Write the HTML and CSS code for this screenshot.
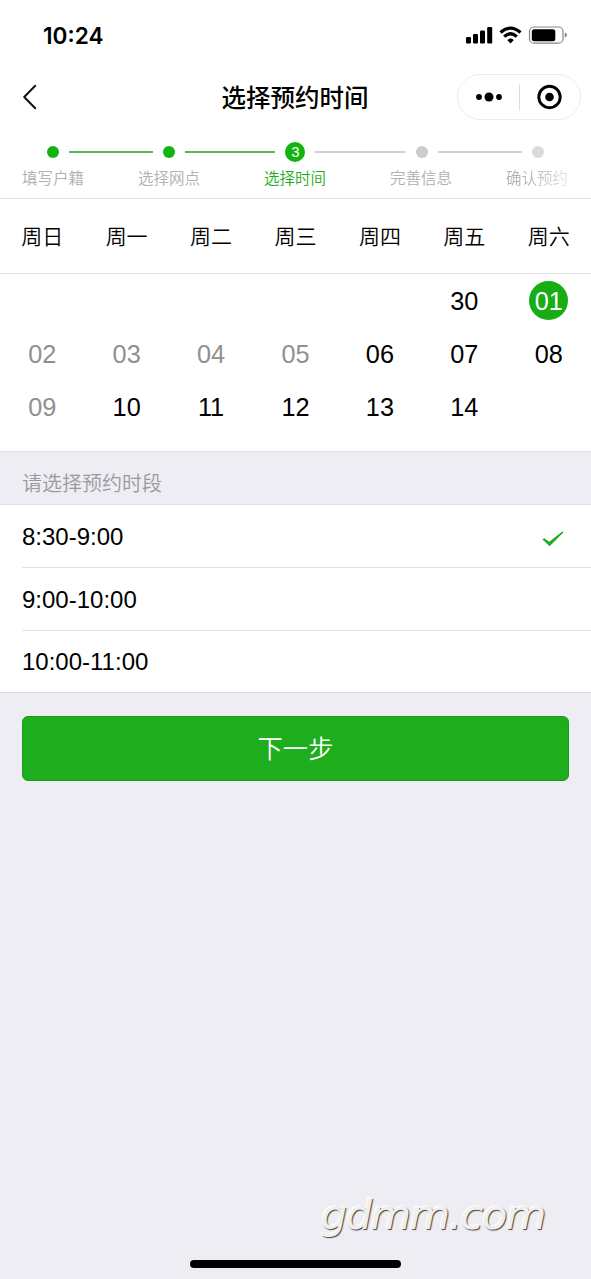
FILE: index.html
```html
<!DOCTYPE html>
<html lang="zh-CN">
<head>
<meta charset="utf-8">
<title>选择预约时间</title>
<link rel="stylesheet" href="styles.css">
</head>
<body>
<div class="screen">
  <header class="status">
    <span class="clock">10:24</span>
    <svg class="status-icons" width="102" height="20" viewBox="0 0 102 20">
      <rect x="1" y="12" width="5" height="6.500" rx="1.200"/>
      <rect x="8" y="9" width="5" height="9.500" rx="1.200"/>
      <rect x="15" y="5.500" width="5" height="13" rx="1.200"/>
      <rect x="22.200" y="2" width="5" height="16.500" rx="1.200"/>
      <g fill="none" stroke="#000" stroke-width="3.200">
        <path d="M35.500 7.500 Q45.500 -1.300 55.500 7.500"/>
        <path d="M39.200 11.600 Q45.500 5.800 51.800 11.600"/>
      </g>
      <path d="M42.200 15 Q45.500 12.200 48.800 15 L45.500 18.500 Z"/>
      <rect x="64.500" y="2" width="33.500" height="16.200" rx="4.500" fill="none" stroke="#858585" stroke-width="1.200"/>
      <rect x="66.800" y="4.200" width="23.500" height="12" rx="2.500"/>
      <path d="M99.800 7.500 Q102 8.300 102 10 Q102 11.700 99.800 12.500 Z" fill="#858585"/>
    </svg>
  </header>

  <nav class="nav">
    <svg class="back" width="16" height="26" viewBox="0 0 16 26"><path d="M13.200 1.800 L2.200 13 L13.200 24.200" fill="none" stroke="#111" stroke-width="2" stroke-linecap="round" stroke-linejoin="round"/></svg>
    <h1 class="title">选择预约时间</h1>
    <div class="capsule">
      <svg class="more" width="28" height="12" viewBox="0 0 28 12"><circle cx="4" cy="6" r="2.900"/><circle cx="14" cy="6" r="4.500"/><circle cx="24" cy="6" r="2.900"/></svg>
      <span class="capsule-line"></span>
      <svg width="26" height="26" viewBox="0 0 26 26"><circle cx="13.500" cy="13" r="10.700" fill="none" stroke="#000" stroke-width="2.900"/><circle cx="13.500" cy="13" r="4.300"/></svg>
    </div>
  </nav>

  <section class="steps">
    <div class="track">
      <i class="dot done"></i><i class="line done"></i>
      <i class="dot done"></i><i class="line long done"></i>
      <b class="current">3</b><i class="line long"></i>
      <i class="dot"></i><i class="line"></i>
      <i class="dot last"></i>
    </div>
    <div class="labels">
      <span>填写户籍</span><span>选择网点</span><span class="active">选择时间</span><span>完善信息</span><span class="fade">确认预约</span>
    </div>
  </section>

  <div class="week">
    <span>周日</span><span>周一</span><span>周二</span><span>周三</span><span>周四</span><span>周五</span><span>周六</span>
  </div>

  <div class="days">
    <span></span><span></span><span></span><span></span><span></span><span>30</span><span><b class="selected">01</b></span>
    <span class="off">02</span><span class="off">03</span><span class="off">04</span><span class="off">05</span><span>06</span><span>07</span><span>08</span>
    <span class="off">09</span><span>10</span><span>11</span><span>12</span><span>13</span><span>14</span><span></span>
  </div>

  <div class="hint">请选择预约时段</div>

  <ul class="slots">
    <li>8:30-9:00
      <svg width="22" height="16" viewBox="0 0 22 16"><path d="M0.500 8.500 L2.200 7.200 L7.300 10.800 L20.300 0.500 L21.500 1.300 L7.600 15.200 Z" fill="#1ead1c"/></svg>
    </li>
    <li>9:00-10:00</li>
    <li>10:00-11:00</li>
  </ul>

  <button class="next">下一步</button>

  <footer class="footer">
    <div class="watermark">gdmm.com</div>
    <div class="home-bar"></div>
  </footer>
</div>
</body>
</html>
```
FILE: styles.css
```css
* { box-sizing: border-box; }

body {
  margin: 0;
  background: #eeedf3;
  color: #000;
  font-family: "Liberation Sans", "Noto Sans CJK SC", sans-serif;
}

.screen {
  display: flex;
  flex-direction: column;
  width: 591px;
  height: 1279px;
  overflow: hidden;
}

.status {
  display: flex;
  justify-content: space-between;
  align-items: center;
  height: 70px;
  padding: 0 24px 0 43px;
  background: #fff;
}

.clock {
  padding-top: 2px;
  font: 600 22.6px/30px Inter, sans-serif;
}

.nav {
  display: grid;
  grid-template-columns: 1fr auto 1fr;
  align-items: center;
  height: 54px;
  padding: 0 10px 0 22px;
  background: #fff;
}

.title {
  margin: 0 0 0 -13px;
  padding-top: 3px;
  font-size: 24.5px;
  line-height: 36px;
  font-weight: 500;
}

.capsule {
  display: flex;
  align-items: center;
  justify-self: end;
  gap: 16px;
  width: 124px;
  height: 46px;
  padding-left: 17px;
  border: 1px solid #ececec;
  border-radius: 23px;
}

.capsule-line {
  width: 1px;
  height: 27px;
  background: #dcdcdc;
}

.steps {
  height: 75px;
  padding-top: 16px;
  border-bottom: 1px solid #e5e5e5;
  background: #fff;
}

.track {
  display: flex;
  align-items: center;
  gap: 10.1px;
  height: 24px;
  padding-left: 47px;
}

.dot {
  width: 12px;
  height: 12px;
  border-radius: 50%;
  background: #ccc;
}

.dot.last { background: #dadada; }

.line {
  width: 84px;
  height: 2px;
  background: #d2d2d2;
}

.line.long { width: 90px; }
.dot.done { background: #12b50f; }
.line.done { background: #59b556; }

.current {
  width: 20px;
  height: 20px;
  border-radius: 50%;
  background: #12b50f;
  color: #fff;
  font-size: 15px;
  line-height: 20px;
  font-weight: 400;
  text-align: center;
}

.labels {
  display: grid;
  grid-template-columns: 116px 126px 126px 116px 70px;
  padding: 1px 0 0 22px;
  color: #b0b0b0;
  font-family: "Noto Sans CJK SC DemiLight", "Noto Sans CJK SC", sans-serif;
  font-size: 15.5px;
  line-height: 24px;
  font-weight: 350;
}

.labels .active { color: #1ead1c; }

.labels .fade {
  background: linear-gradient(90deg, #b0b0b0 30%, #e4e4e4 90%);
  background-clip: text;
  color: transparent;
}

.week, .days {
  display: grid;
  grid-template-columns: repeat(7, 1fr);
  background: #fff;
  text-align: center;
}

.week {
  height: 75px;
  border-bottom: 1px solid #e5e5e5;
  font-size: 21px;
  line-height: 75px;
  font-weight: 350;
}

.days {
  height: 177px;
  grid-auto-rows: 53px;
  align-content: start;
  font-size: 25.3px;
  line-height: 55px;
}

.off { color: #909090; }

.selected {
  display: block;
  width: 39px;
  height: 39px;
  margin: 7px auto 0;
  border-radius: 50%;
  background: #18ad15;
  color: #fff;
  font-weight: 400;
  line-height: 41px;
}

.hint {
  height: 54px;
  padding-left: 22px;
  border-top: 1px solid #e2e2e6;
  border-bottom: 1px solid #dedee2;
  color: #9a9a9e;
  font-size: 20px;
  line-height: 65px;
  font-weight: 350;
}

.slots {
  height: 188px;
  margin: 0;
  padding: 0 0 0 22px;
  border-bottom: 1px solid #dedee2;
  background: #fff;
  list-style: none;
}

.slots li {
  display: flex;
  justify-content: space-between;
  align-items: center;
  height: 63px;
  padding: 1px 27px 0 0;
  border-bottom: 1px solid #e1e1e3;
  font-size: 24px;
}

.slots svg { margin-top: 5px; }
.slots li:last-child { height: 61px; border: 0; }

.next {
  height: 65px;
  margin: 23px 22px 0;
  padding: 0 0 3px;
  border: 1px solid #1b9b1a;
  border-radius: 6px;
  background: #1ead1c;
  color: #fff;
  font: 350 25.3px/60px "Noto Sans CJK SC", sans-serif;
}

.footer {
  display: flex;
  flex-direction: column;
  align-items: center;
  margin-top: auto;
  padding-bottom: 11px;
}

.watermark {
  align-self: flex-end;
  margin-right: 46px;
  color: #efefef;
  font: italic 400 41.5px/60px "DejaVu Sans", sans-serif;
  letter-spacing: -1.4px;
  text-shadow: 1px 1px 1px #444, -1px -1px 1px #fff;
}

.home-bar {
  width: 211px;
  height: 8px;
  margin-top: 15px;
  border-radius: 4px;
  background: #000;
}
```
